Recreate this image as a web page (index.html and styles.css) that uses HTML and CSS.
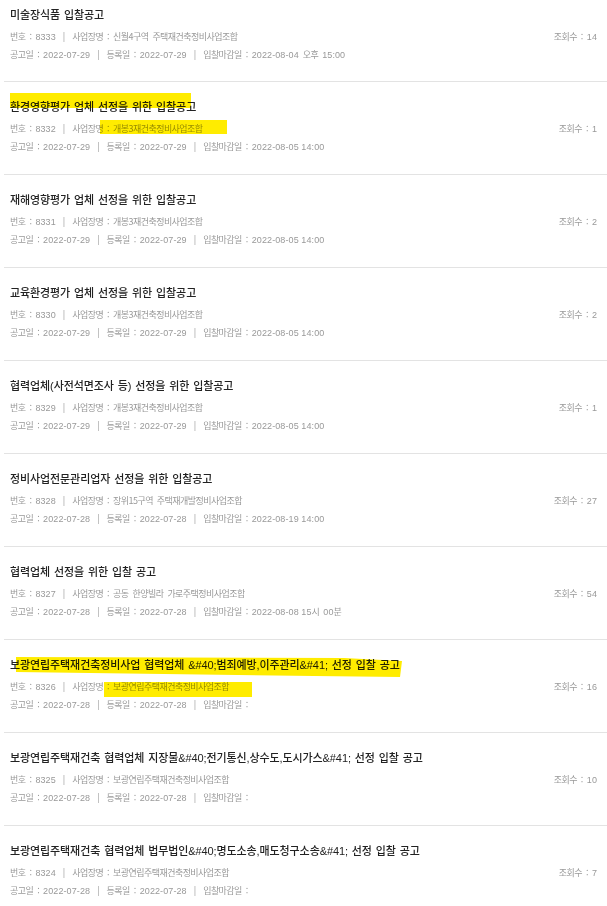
FILE: index.html
```html
<!DOCTYPE html>
<html lang="ko">
<head>
<meta charset="utf-8">
<title>입찰공고</title>
<link rel="stylesheet" href="styles.css">
</head>
<body>
<ul class="list">
  <li class="item">
    <p class="title">미술장식품 입찰공고</p>
    <div class="meta row1"><span class="left">번호 : <span class="d">8333</span><span class="sep">|</span>사업장명 : 신월4구역 주택재건축정비사업조합</span><span class="views">조회수 : <span class="d">14</span></span></div>
    <div class="meta">공고일 : <span class="d">2022-07-29</span><span class="sep">|</span>등록일 : <span class="d">2022-07-29</span><span class="sep">|</span>입찰마감일 : <span class="d">2022-08-04</span> 오후 <span class="d">15:00</span></div>
  </li>
  <li class="item">
    <p class="title">환경영향평가 업체 선정을 위한 입찰공고</p>
    <div class="meta row1"><span class="left">번호 : <span class="d">8332</span><span class="sep">|</span>사업장명 : 개봉3재건축정비사업조합</span><span class="views">조회수 : <span class="d">1</span></span></div>
    <div class="meta">공고일 : <span class="d">2022-07-29</span><span class="sep">|</span>등록일 : <span class="d">2022-07-29</span><span class="sep">|</span>입찰마감일 : <span class="d">2022-08-05 14:00</span></div>
    <span class="mark mark-a1"></span>
    <span class="mark mark-a2"></span>
  </li>
  <li class="item">
    <p class="title">재해영향평가 업체 선정을 위한 입찰공고</p>
    <div class="meta row1"><span class="left">번호 : <span class="d">8331</span><span class="sep">|</span>사업장명 : 개봉3재건축정비사업조합</span><span class="views">조회수 : <span class="d">2</span></span></div>
    <div class="meta">공고일 : <span class="d">2022-07-29</span><span class="sep">|</span>등록일 : <span class="d">2022-07-29</span><span class="sep">|</span>입찰마감일 : <span class="d">2022-08-05 14:00</span></div>
  </li>
  <li class="item">
    <p class="title">교육환경평가 업체 선정을 위한 입찰공고</p>
    <div class="meta row1"><span class="left">번호 : <span class="d">8330</span><span class="sep">|</span>사업장명 : 개봉3재건축정비사업조합</span><span class="views">조회수 : <span class="d">2</span></span></div>
    <div class="meta">공고일 : <span class="d">2022-07-29</span><span class="sep">|</span>등록일 : <span class="d">2022-07-29</span><span class="sep">|</span>입찰마감일 : <span class="d">2022-08-05 14:00</span></div>
  </li>
  <li class="item">
    <p class="title">협력업체(사전석면조사 등) 선정을 위한 입찰공고</p>
    <div class="meta row1"><span class="left">번호 : <span class="d">8329</span><span class="sep">|</span>사업장명 : 개봉3재건축정비사업조합</span><span class="views">조회수 : <span class="d">1</span></span></div>
    <div class="meta">공고일 : <span class="d">2022-07-29</span><span class="sep">|</span>등록일 : <span class="d">2022-07-29</span><span class="sep">|</span>입찰마감일 : <span class="d">2022-08-05 14:00</span></div>
  </li>
  <li class="item">
    <p class="title">정비사업전문관리업자 선정을 위한 입찰공고</p>
    <div class="meta row1"><span class="left">번호 : <span class="d">8328</span><span class="sep">|</span>사업장명 : 장위15구역 주택재개발정비사업조합</span><span class="views">조회수 : <span class="d">27</span></span></div>
    <div class="meta">공고일 : <span class="d">2022-07-28</span><span class="sep">|</span>등록일 : <span class="d">2022-07-28</span><span class="sep">|</span>입찰마감일 : <span class="d">2022-08-19 14:00</span></div>
  </li>
  <li class="item">
    <p class="title">협력업체 선정을 위한 입찰 공고</p>
    <div class="meta row1"><span class="left">번호 : <span class="d">8327</span><span class="sep">|</span>사업장명 : 공동 한양빌라 가로주택정비사업조합</span><span class="views">조회수 : <span class="d">54</span></span></div>
    <div class="meta">공고일 : <span class="d">2022-07-28</span><span class="sep">|</span>등록일 : <span class="d">2022-07-28</span><span class="sep">|</span>입찰마감일 : <span class="d">2022-08-08 15</span>시 <span class="d">00</span>분</div>
  </li>
  <li class="item">
    <p class="title">보광연립주택재건축정비사업 협력업체 &amp;#40;범죄예방,이주관리&amp;#41; 선정 입찰 공고</p>
    <div class="meta row1"><span class="left">번호 : <span class="d">8326</span><span class="sep">|</span>사업장명 : 보광연립주택재건축정비사업조합</span><span class="views">조회수 : <span class="d">16</span></span></div>
    <div class="meta">공고일 : <span class="d">2022-07-28</span><span class="sep">|</span>등록일 : <span class="d">2022-07-28</span><span class="sep">|</span>입찰마감일 : </div>
    <svg class="mark-svg mark-b1" width="390" height="24" viewBox="0 0 390 24"><path d="M2 2 L330 3 L388 6 L386 22 L300 21 L2 17 Z" fill="#ffec00"/></svg>
    <span class="mark mark-b2"></span>
  </li>
  <li class="item">
    <p class="title">보광연립주택재건축 협력업체 지장물&amp;#40;전기통신,상수도,도시가스&amp;#41; 선정 입찰 공고</p>
    <div class="meta row1"><span class="left">번호 : <span class="d">8325</span><span class="sep">|</span>사업장명 : 보광연립주택재건축정비사업조합</span><span class="views">조회수 : <span class="d">10</span></span></div>
    <div class="meta">공고일 : <span class="d">2022-07-28</span><span class="sep">|</span>등록일 : <span class="d">2022-07-28</span><span class="sep">|</span>입찰마감일 : </div>
  </li>
  <li class="item">
    <p class="title">보광연립주택재건축 협력업체 법무법인&amp;#40;명도소송,매도청구소송&amp;#41; 선정 입찰 공고</p>
    <div class="meta row1"><span class="left">번호 : <span class="d">8324</span><span class="sep">|</span>사업장명 : 보광연립주택재건축정비사업조합</span><span class="views">조회수 : <span class="d">7</span></span></div>
    <div class="meta">공고일 : <span class="d">2022-07-28</span><span class="sep">|</span>등록일 : <span class="d">2022-07-28</span><span class="sep">|</span>입찰마감일 : </div>
  </li>
</ul>
</body>
</html>
```

FILE: styles.css
```css
* { box-sizing: border-box; }
html, body { margin: 0; padding: 0; background: #fff; }
body {
  font-family: "Noto Sans CJK KR", "Noto Sans", sans-serif;
  overflow: hidden;
}
.list {
  list-style: none;
  margin: 0 0 0 4px;
  padding: 0;
}
.item {
  position: relative;
  height: 93px;
  padding: 17px 10px 0 6px;
  border-bottom: 1px solid #e3e3e3;
}
.item:first-child {
  height: 82px;
  padding-top: 7px;
}
.title {
  margin: 0;
  font-family: "Liberation Sans", "Noto Sans CJK KR", sans-serif;
  font-size: 11px;
  line-height: 16px;
  font-weight: 500;
  color: #222;
  letter-spacing: -0.1px;
  word-spacing: 1px;
  white-space: nowrap;
}
.meta {
  font-size: 9px;
  line-height: 18px;
  color: #999;
  letter-spacing: -0.55px;
  word-spacing: 2px;
  white-space: nowrap;
}
.row1 {
  margin-top: 5px;
  display: flex;
  justify-content: space-between;
}
.d {
  font-family: "Liberation Sans", "Noto Sans CJK KR", sans-serif;
  letter-spacing: 0.1px;
  word-spacing: 0;
}
.sep {
  display: inline-block;
  margin: 0 7px;
  letter-spacing: 0;
}
.mark {
  position: absolute;
  background: #ffec00;
  mix-blend-mode: multiply;
}
.mark-svg {
  position: absolute;
  mix-blend-mode: multiply;
}
.mark-a1 { left: 6px; top: 11px; width: 181px; height: 15px; }
.mark-a2 { left: 96px; top: 38px; width: 127px; height: 14px; }
.mark-b1 { left: 10px; top: 15px; }
.mark-b2 { left: 100px; top: 42px; width: 148px; height: 15px; }
```
